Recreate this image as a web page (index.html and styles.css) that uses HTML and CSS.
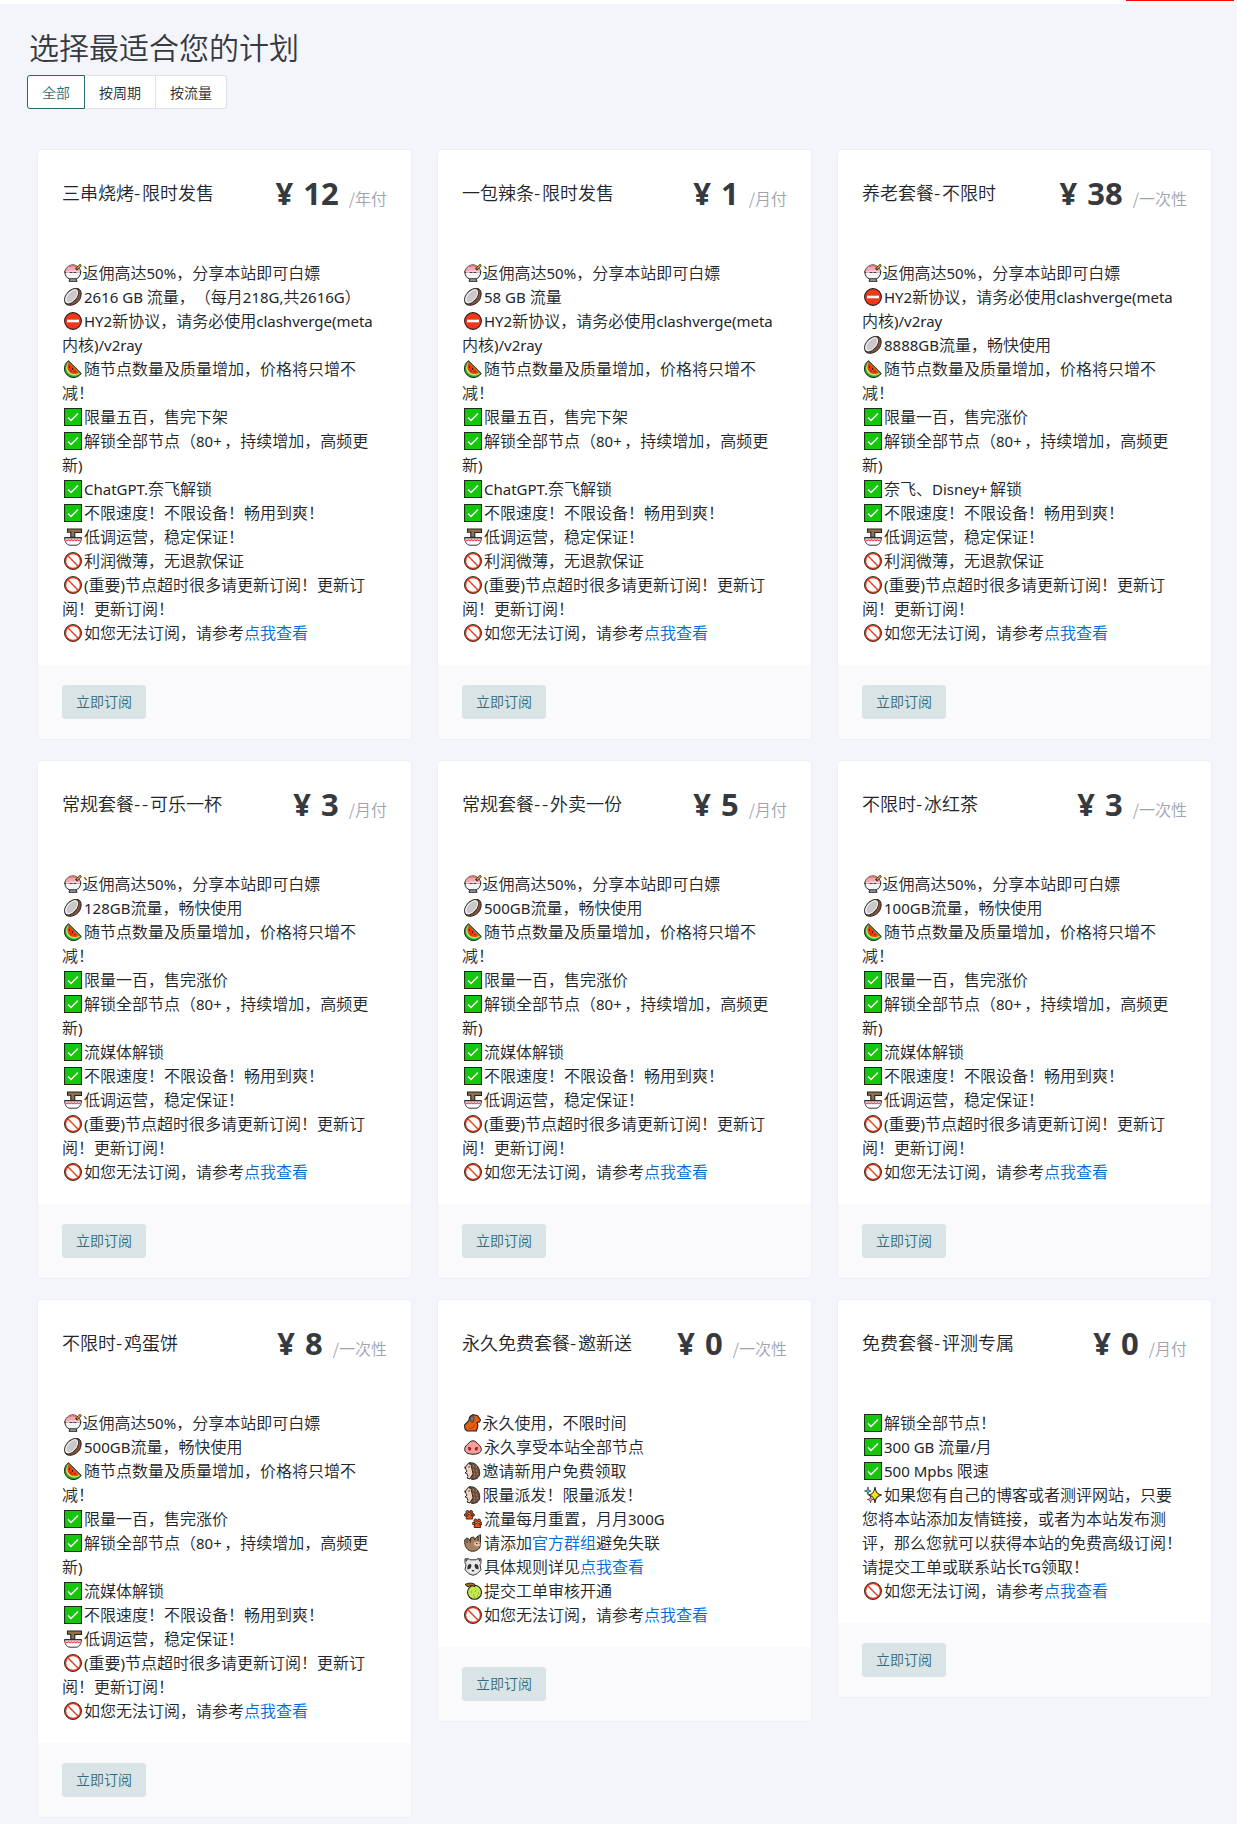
FILE: index.html
```html
<!DOCTYPE html>
<html lang="zh-CN">
<head>
<meta charset="utf-8">
<title>选择最适合您的计划</title>
<link rel="stylesheet" href="styles.css">
</head>
<body>
<svg class="sprite" aria-hidden="true">
  <symbol id="ice" viewBox="0 0 18 18"><path d="M5 17.300h8l-1.500-4h-5z" fill="#a9adb2" stroke="#222" stroke-width="1"/><path d="M.8 7.500h16c0 4-2.500 6.800-4.500 7.300h-7C3 14.300.8 11.500.8 7.500z" fill="#f4f4f6" stroke="#222"/><path d="M.8 8.500C.8 4.500 5 .8 8.800.8s8 3.700 8 7.700z" fill="#f3a9b0" stroke="#333" stroke-width=".9"/><path d="M2 8h3l2-1.500L9 8l2-1.500L13 8h3" stroke="#fbdadd" stroke-width="1.300" fill="none"/><path d="M5 3c2-1.500 5-1.500 7 0" stroke="#e0707c" stroke-width="1.500" fill="none"/><path d="M12 5.500L17 .8" stroke="#332a15" stroke-width="2.600"/><path d="M13 4.500L16.600 1.200" stroke="#efb11c" stroke-width="1.200"/></symbol>
  <symbol id="coconut" viewBox="0 0 18 18"><path d="M2 16C-1 13 5 1.500 12.500.6c4.500-.4 5.500 4.500 4 9C15 15.500 6 19.500 2 16z" fill="#885139" stroke="#241d1a"/><ellipse cx="7.600" cy="8.200" rx="9" ry="5.300" transform="rotate(-50 7.600 8.200)" fill="#f2f2f2" stroke="#3b302b"/><ellipse cx="7.800" cy="8.200" rx="7" ry="3.700" transform="rotate(-50 7.800 8.200)" fill="#c9c9cb"/></symbol>
  <symbol id="noentry" viewBox="0 0 18 18"><circle cx="9" cy="9" r="8.400" fill="#f03a17" stroke="#222" stroke-width="1.100"/><path d="M3 7.700h12v2.600H3z" fill="#fff"/></symbol>
  <symbol id="melon" viewBox="0 0 18 18"><path d="M4.500.8C-.5 4.500-.8 11 3 14.800s10 4 14.300-1.300z" fill="#16a82e" stroke="#222"/><path d="M4.300 2C1.300 6 1.300 10.500 4.300 13.300s8 3.500 11.700.3z" fill="#bce64a"/><path d="M4.700 2C2.800 6 3 9.500 5.300 11.800s6 3 9.700 1.200z" fill="#f03a17"/><path d="M5.500 6v2M8.500 8v2M7 10.500v1M11 11v1" stroke="#511"/></symbol>
  <symbol id="check" viewBox="0 0 18 18"><path d="M.5.500h17v17H.5z" fill="#16c60c" stroke="#173117" stroke-width="1.100"/><path d="M4 9.500l3 3 7-7" stroke="#fff" stroke-width="1.500" fill="none"/></symbol>
  <symbol id="bowl" viewBox="0 0 18 18"><path d="M.6 9.500h16.800c0 4-2 7.700-5.400 7.700H6C2.600 17.200.6 13.500.6 9.500z" fill="#fff" stroke="#333"/><path d="M1.500 11.800l1.500 1 1.500-1 1.500 1 1.500-1 1.500 1 1.500-1 1.500 1 1.500-1 1.500 1 1.500-1" stroke="#f04a5a" stroke-width="1.200" fill="none"/><path d="M17.500 1H3.500v3.200h3.300v5h4V4.500h6.700z" fill="#927047" stroke="#222" stroke-width="1.100"/><path d="M.6 9.800h16.800" stroke="#333" stroke-width="1.200"/></symbol>
  <symbol id="ban" viewBox="0 0 18 18"><circle cx="9" cy="9" r="7.700" fill="#fff" stroke="#f03a17" stroke-width="1.800"/><circle cx="9" cy="9" r="8.500" fill="none" stroke="#222" stroke-width=".9"/><path d="M3.800 3.800l10.400 10.400" stroke="#e0452a" stroke-width="1.500"/></symbol>
  <symbol id="ape" viewBox="0 0 18 18"><path d="M6 2.500L9 .7l4.500 1 3 4-1 2.300-2.500.5 1 3-1.500 5.500H3L1 15l-.5-4 4-4z" fill="#e95d0c" stroke="#222" stroke-width="1.100"/><path d="M6.500 3c1.500-1.500 4-.5 3.500 1.500l-.8 3.500c-2 1-3.700-1-2.700-5z" fill="#747474" stroke="#333" stroke-width=".8"/><path d="M5 14.500c4 0 5-2 6-4" stroke="#a23c06" fill="none"/></symbol>
  <symbol id="snout" viewBox="0 0 18 18"><path d="M9 2.800c2.500 0 3.500 2 6 4 3 3 3.500 7-1 8.700-3 1-7 1-10 0C0 14-.5 9.800 3 6.800c2-2 3.500-4 6-4z" fill="#f2a19a" stroke="#222"/><path d="M4 9.300c2-1 4 .5 3 2.500s-3 1-3-2.500zM14 9.300c-2-1-4 .5-3 2.500s3 1 3-2.500z" fill="#a61f2f"/></symbol>
  <symbol id="hog" viewBox="0 0 18 18"><path d="M5 .8c7-1 11 5 10.700 11-.5 4-3.700 6-8 5.500L5 15z" fill="#70513f" stroke="#222"/><path d="M4 1.500l3 1 1 5 1 4-3 5.500-3-1 1-1.500-1-3-2-.5 2-2L1 6z" fill="#f2d4c1" stroke="#332a27"/><path d="M9 4h1m2 1h1m-4 3h1m2 1h1m-3 3h1m2 0h1m-4 3h1" stroke="#c59d85"/><path d="M.5 5.500h1.500M4.500 5h1" stroke="#111" stroke-width="1.500"/></symbol>
  <symbol id="paws" viewBox="0 0 18 18"><g id="paw" fill="#e95511" stroke="#331a10" stroke-width=".9"><circle cx="1.800" cy="5" r="1.400"/><circle cx="3.500" cy="2" r="1.500"/><circle cx="7" cy="2" r="1.500"/><circle cx="9" cy="5" r="1.400"/><path d="M5.300 4C3 5 2 7 2.200 9h6.400C9 7 7.500 5 5.300 4z"/></g><use href="#paw" x="8" y="8.500"/></symbol>
  <symbol id="sloth" viewBox="0 0 18 18"><path d="M16.500.7v9C17 14 13 17.300 8.500 17.300S0 13 .7 6l2-2 2 .8 1 2 1-3 3-.8 1 3 2-3z" fill="#a7825f" stroke="#332a23"/><path d="M9.500 9l4-1.500 3 1v3l-3 1-3-1z" fill="#dfc0a2"/><path d="M3 5v4M7 5l-1 4M12 9.500h1.500m2 0h1M14 2v5" stroke="#47382d"/></symbol>
  <symbol id="panda" viewBox="0 0 18 18"><path d="M1 .8h4l1 1h6l1-1h4v4l-1 2 1 5-4 4-4 1.500-4-1.500-4-4 1-5-1-2z" fill="#e7e7e8" stroke="#333"/><path d="M1.500 1.300h2.700L2 4zM16.500 1.300h-2.700L16 4z" fill="#444"/><path d="M6 6c2 0 1.500 2.500.5 4.500l-3 1C3 9 4 6 6 6zM12 6c-2 0-1.500 2.500-.5 4.500l3 1C15 9 14 6 12 6z" fill="#333"/><path d="M7.500 12h3L9 14z" fill="#222"/></symbol>
  <symbol id="fruit" viewBox="0 0 18 18"><circle cx="10.500" cy="10.300" r="7" fill="#c4e64b" stroke="#222" stroke-width="1.100"/><path d="M1 2.500c4-2 8-1.500 10 0v2C8 3.500 5 3 4 5z" fill="#a86b1d" stroke="#222"/><path d="M7 10h1m3-1h1m2 2h1m-6 2h1m3 1h1m-4 1h1" stroke="#6d942b" stroke-width="1.200"/></symbol>
  <symbol id="sparkles" viewBox="0 0 18 18"><path d="M11 1c.5 5 2 7 6.700 8-4.700 1-6.200 3-6.700 8-.5-5-2-7-6.500-8C9 8 10.500 6 11 1z" fill="#fde300" stroke="#222" stroke-width="1.100"/><path d="M4 1c.3 3 .8 3.500 3 4-2.200.5-2.700 1-3 4-.3-3-.8-3.500-3.500-4C3.200 4.500 3.700 4 4 1z" fill="#35bce5" stroke="#263238" stroke-width=".7"/><path d="M6.500 10c.3 2.500.8 3 3 3.500-2.200.5-2.700 1-3 3.500-.3-2.500-.8-3-3-3.500 2.200-.5 2.700-1 3-3.500z" fill="#f59ab6" stroke="#392630" stroke-width=".7"/></symbol>
</svg>

<header class="topbar"><span class="topbar-mark"></span></header>
<main class="page">
  <h1 class="heading">选择最适合您的计划</h1>
  <nav class="tabs"><a class="tab active">全部</a><a class="tab">按周期</a><a class="tab">按流量</a></nav>

  <section class="plans">
    <article class="card">
      <header class="card-head"><h2 class="name">三串烧烤<i>-</i>限时发售</h2><div class="price"><b>¥ 12</b><span class="term">/年付</span></div></header>
      <div class="card-body">
        <p><svg class="e n"><use href="#ice"/></svg>返佣高达<span class="en">50%</span>，分享本站即可白嫖</p>
        <p><svg class="e"><use href="#coconut"/></svg><span class="en">2616 GB </span>流量，（每月<span class="en">218G,</span>共<span class="en">2616G</span>）</p>
        <p><svg class="e"><use href="#noentry"/></svg><span class="en">HY2</span>新协议，请务必使用<span class="en">clashverge(meta</span><br>内核<span class="en">)/v2ray</span></p>
        <p><svg class="e"><use href="#melon"/></svg>随节点数量及质量增加，价格将只增不<br>减！</p>
        <p><svg class="e"><use href="#check"/></svg>限量五百，售完下架</p>
        <p><svg class="e"><use href="#check"/></svg>解锁全部节点（<span class="en">80<u>+</u></span>，持续增加，高频更<br>新<span class="en">)</span></p>
        <p><svg class="e"><use href="#check"/></svg><span class="en">ChatGPT.</span>奈飞解锁</p>
        <p><svg class="e"><use href="#check"/></svg>不限速度！不限设备！畅用到爽！</p>
        <p><svg class="e"><use href="#bowl"/></svg>低调运营，稳定保证！</p>
        <p><svg class="e"><use href="#ban"/></svg>利润微薄，无退款保证</p>
        <p><svg class="e"><use href="#ban"/></svg><span class="en">(</span>重要<span class="en">)</span>节点超时很多请更新订阅！更新订<br>阅！更新订阅！</p>
        <p><svg class="e"><use href="#ban"/></svg>如您无法订阅，请参考<a>点我查看</a></p>
      </div>
      <footer class="card-foot"><button class="btn">立即订阅</button></footer>
    </article>

    <article class="card">
      <header class="card-head"><h2 class="name">一包辣条<i>-</i>限时发售</h2><div class="price"><b>¥ 1</b><span class="term">/月付</span></div></header>
      <div class="card-body">
        <p><svg class="e n"><use href="#ice"/></svg>返佣高达<span class="en">50%</span>，分享本站即可白嫖</p>
        <p><svg class="e"><use href="#coconut"/></svg><span class="en">58 GB </span>流量</p>
        <p><svg class="e"><use href="#noentry"/></svg><span class="en">HY2</span>新协议，请务必使用<span class="en">clashverge(meta</span><br>内核<span class="en">)/v2ray</span></p>
        <p><svg class="e"><use href="#melon"/></svg>随节点数量及质量增加，价格将只增不<br>减！</p>
        <p><svg class="e"><use href="#check"/></svg>限量五百，售完下架</p>
        <p><svg class="e"><use href="#check"/></svg>解锁全部节点（<span class="en">80<u>+</u></span>，持续增加，高频更<br>新<span class="en">)</span></p>
        <p><svg class="e"><use href="#check"/></svg><span class="en">ChatGPT.</span>奈飞解锁</p>
        <p><svg class="e"><use href="#check"/></svg>不限速度！不限设备！畅用到爽！</p>
        <p><svg class="e"><use href="#bowl"/></svg>低调运营，稳定保证！</p>
        <p><svg class="e"><use href="#ban"/></svg>利润微薄，无退款保证</p>
        <p><svg class="e"><use href="#ban"/></svg><span class="en">(</span>重要<span class="en">)</span>节点超时很多请更新订阅！更新订<br>阅！更新订阅！</p>
        <p><svg class="e"><use href="#ban"/></svg>如您无法订阅，请参考<a>点我查看</a></p>
      </div>
      <footer class="card-foot"><button class="btn">立即订阅</button></footer>
    </article>

    <article class="card">
      <header class="card-head"><h2 class="name">养老套餐<i>-</i>不限时</h2><div class="price"><b>¥ 38</b><span class="term">/一次性</span></div></header>
      <div class="card-body">
        <p><svg class="e n"><use href="#ice"/></svg>返佣高达<span class="en">50%</span>，分享本站即可白嫖</p>
        <p><svg class="e"><use href="#noentry"/></svg><span class="en">HY2</span>新协议，请务必使用<span class="en">clashverge(meta</span><br>内核<span class="en">)/v2ray</span></p>
        <p><svg class="e"><use href="#coconut"/></svg><span class="en">8888GB</span>流量，畅快使用</p>
        <p><svg class="e"><use href="#melon"/></svg>随节点数量及质量增加，价格将只增不<br>减！</p>
        <p><svg class="e"><use href="#check"/></svg>限量一百，售完涨价</p>
        <p><svg class="e"><use href="#check"/></svg>解锁全部节点（<span class="en">80<u>+</u></span>，持续增加，高频更<br>新<span class="en">)</span></p>
        <p><svg class="e"><use href="#check"/></svg>奈飞、<span class="en">Disney<u>+</u></span>解锁</p>
        <p><svg class="e"><use href="#check"/></svg>不限速度！不限设备！畅用到爽！</p>
        <p><svg class="e"><use href="#bowl"/></svg>低调运营，稳定保证！</p>
        <p><svg class="e"><use href="#ban"/></svg>利润微薄，无退款保证</p>
        <p><svg class="e"><use href="#ban"/></svg><span class="en">(</span>重要<span class="en">)</span>节点超时很多请更新订阅！更新订<br>阅！更新订阅！</p>
        <p><svg class="e"><use href="#ban"/></svg>如您无法订阅，请参考<a>点我查看</a></p>
      </div>
      <footer class="card-foot"><button class="btn">立即订阅</button></footer>
    </article>

    <article class="card">
      <header class="card-head"><h2 class="name">常规套餐<i>--</i>可乐一杯</h2><div class="price"><b>¥ 3</b><span class="term">/月付</span></div></header>
      <div class="card-body">
        <p><svg class="e n"><use href="#ice"/></svg>返佣高达<span class="en">50%</span>，分享本站即可白嫖</p>
        <p><svg class="e"><use href="#coconut"/></svg><span class="en">128GB</span>流量，畅快使用</p>
        <p><svg class="e"><use href="#melon"/></svg>随节点数量及质量增加，价格将只增不<br>减！</p>
        <p><svg class="e"><use href="#check"/></svg>限量一百，售完涨价</p>
        <p><svg class="e"><use href="#check"/></svg>解锁全部节点（<span class="en">80<u>+</u></span>，持续增加，高频更<br>新<span class="en">)</span></p>
        <p><svg class="e"><use href="#check"/></svg>流媒体解锁</p>
        <p><svg class="e"><use href="#check"/></svg>不限速度！不限设备！畅用到爽！</p>
        <p><svg class="e"><use href="#bowl"/></svg>低调运营，稳定保证！</p>
        <p><svg class="e"><use href="#ban"/></svg><span class="en">(</span>重要<span class="en">)</span>节点超时很多请更新订阅！更新订<br>阅！更新订阅！</p>
        <p><svg class="e"><use href="#ban"/></svg>如您无法订阅，请参考<a>点我查看</a></p>
      </div>
      <footer class="card-foot"><button class="btn">立即订阅</button></footer>
    </article>

    <article class="card">
      <header class="card-head"><h2 class="name">常规套餐<i>--</i>外卖一份</h2><div class="price"><b>¥ 5</b><span class="term">/月付</span></div></header>
      <div class="card-body">
        <p><svg class="e n"><use href="#ice"/></svg>返佣高达<span class="en">50%</span>，分享本站即可白嫖</p>
        <p><svg class="e"><use href="#coconut"/></svg><span class="en">500GB</span>流量，畅快使用</p>
        <p><svg class="e"><use href="#melon"/></svg>随节点数量及质量增加，价格将只增不<br>减！</p>
        <p><svg class="e"><use href="#check"/></svg>限量一百，售完涨价</p>
        <p><svg class="e"><use href="#check"/></svg>解锁全部节点（<span class="en">80<u>+</u></span>，持续增加，高频更<br>新<span class="en">)</span></p>
        <p><svg class="e"><use href="#check"/></svg>流媒体解锁</p>
        <p><svg class="e"><use href="#check"/></svg>不限速度！不限设备！畅用到爽！</p>
        <p><svg class="e"><use href="#bowl"/></svg>低调运营，稳定保证！</p>
        <p><svg class="e"><use href="#ban"/></svg><span class="en">(</span>重要<span class="en">)</span>节点超时很多请更新订阅！更新订<br>阅！更新订阅！</p>
        <p><svg class="e"><use href="#ban"/></svg>如您无法订阅，请参考<a>点我查看</a></p>
      </div>
      <footer class="card-foot"><button class="btn">立即订阅</button></footer>
    </article>

    <article class="card">
      <header class="card-head"><h2 class="name">不限时<i>-</i>冰红茶</h2><div class="price"><b>¥ 3</b><span class="term">/一次性</span></div></header>
      <div class="card-body">
        <p><svg class="e n"><use href="#ice"/></svg>返佣高达<span class="en">50%</span>，分享本站即可白嫖</p>
        <p><svg class="e"><use href="#coconut"/></svg><span class="en">100GB</span>流量，畅快使用</p>
        <p><svg class="e"><use href="#melon"/></svg>随节点数量及质量增加，价格将只增不<br>减！</p>
        <p><svg class="e"><use href="#check"/></svg>限量一百，售完涨价</p>
        <p><svg class="e"><use href="#check"/></svg>解锁全部节点（<span class="en">80<u>+</u></span>，持续增加，高频更<br>新<span class="en">)</span></p>
        <p><svg class="e"><use href="#check"/></svg>流媒体解锁</p>
        <p><svg class="e"><use href="#check"/></svg>不限速度！不限设备！畅用到爽！</p>
        <p><svg class="e"><use href="#bowl"/></svg>低调运营，稳定保证！</p>
        <p><svg class="e"><use href="#ban"/></svg><span class="en">(</span>重要<span class="en">)</span>节点超时很多请更新订阅！更新订<br>阅！更新订阅！</p>
        <p><svg class="e"><use href="#ban"/></svg>如您无法订阅，请参考<a>点我查看</a></p>
      </div>
      <footer class="card-foot"><button class="btn">立即订阅</button></footer>
    </article>

    <article class="card">
      <header class="card-head"><h2 class="name">不限时<i>-</i>鸡蛋饼</h2><div class="price"><b>¥ 8</b><span class="term">/一次性</span></div></header>
      <div class="card-body">
        <p><svg class="e n"><use href="#ice"/></svg>返佣高达<span class="en">50%</span>，分享本站即可白嫖</p>
        <p><svg class="e"><use href="#coconut"/></svg><span class="en">500GB</span>流量，畅快使用</p>
        <p><svg class="e"><use href="#melon"/></svg>随节点数量及质量增加，价格将只增不<br>减！</p>
        <p><svg class="e"><use href="#check"/></svg>限量一百，售完涨价</p>
        <p><svg class="e"><use href="#check"/></svg>解锁全部节点（<span class="en">80<u>+</u></span>，持续增加，高频更<br>新<span class="en">)</span></p>
        <p><svg class="e"><use href="#check"/></svg>流媒体解锁</p>
        <p><svg class="e"><use href="#check"/></svg>不限速度！不限设备！畅用到爽！</p>
        <p><svg class="e"><use href="#bowl"/></svg>低调运营，稳定保证！</p>
        <p><svg class="e"><use href="#ban"/></svg><span class="en">(</span>重要<span class="en">)</span>节点超时很多请更新订阅！更新订<br>阅！更新订阅！</p>
        <p><svg class="e"><use href="#ban"/></svg>如您无法订阅，请参考<a>点我查看</a></p>
      </div>
      <footer class="card-foot"><button class="btn">立即订阅</button></footer>
    </article>

    <article class="card">
      <header class="card-head"><h2 class="name">永久免费套餐<i>-</i>邀新送</h2><div class="price"><b>¥ 0</b><span class="term">/一次性</span></div></header>
      <div class="card-body">
        <p><svg class="e n"><use href="#ape"/></svg>永久使用，不限时间</p>
        <p><svg class="e"><use href="#snout"/></svg>永久享受本站全部节点</p>
        <p><svg class="e n"><use href="#hog"/></svg>邀请新用户免费领取</p>
        <p><svg class="e n"><use href="#hog"/></svg>限量派发！限量派发！</p>
        <p><svg class="e"><use href="#paws"/></svg>流量每月重置，月月<span class="en">300G</span></p>
        <p><svg class="e"><use href="#sloth"/></svg>请添加<a>官方群组</a>避免失联</p>
        <p><svg class="e"><use href="#panda"/></svg>具体规则详见<a>点我查看</a></p>
        <p><svg class="e"><use href="#fruit"/></svg>提交工单审核开通</p>
        <p><svg class="e"><use href="#ban"/></svg>如您无法订阅，请参考<a>点我查看</a></p>
      </div>
      <footer class="card-foot"><button class="btn">立即订阅</button></footer>
    </article>

    <article class="card">
      <header class="card-head"><h2 class="name">免费套餐<i>-</i>评测专属</h2><div class="price"><b>¥ 0</b><span class="term">/月付</span></div></header>
      <div class="card-body">
        <p><svg class="e"><use href="#check"/></svg>解锁全部节点！</p>
        <p><svg class="e"><use href="#check"/></svg><span class="en">300 GB </span>流量<span class="en">/</span>月</p>
        <p><svg class="e"><use href="#check"/></svg><span class="en">500 Mpbs </span>限速</p>
        <p><svg class="e"><use href="#sparkles"/></svg>如果您有自己的博客或者测评网站，只要<br>您将本站添加友情链接，或者为本站发布测<br>评，那么您就可以获得本站的免费高级订阅！<br>请提交工单或联系站长<span class="en">TG</span>领取！</p>
        <p><svg class="e"><use href="#ban"/></svg>如您无法订阅，请参考<a>点我查看</a></p>
      </div>
      <footer class="card-foot"><button class="btn">立即订阅</button></footer>
    </article>
  </section>
</main>
</body>
</html>
```
FILE: styles.css
```css
* { box-sizing: border-box; }
body {
  margin: 0;
  background: #f4f5fb;
  color: #212529;
  font: 350 16px/24px "Noto Sans CJK SC", sans-serif;
  text-spacing-trim: space-all;
}
.sprite { display: none; }
.topbar {
  height: 4px;
  background: #fff;
  display: flex;
  justify-content: flex-end;
  padding-right: 3px;
}
.topbar-mark { width: 108px; height: 1px; background: #f00; }
.page { padding: 23px 25px 0 27px; }
.heading {
  margin: 0 0 0 2px;
  font-size: 30px;
  font-weight: 350;
  line-height: 38px;
  color: #343a40;
}
.tabs { display: flex; margin-top: 10px; }
.tab {
  height: 34px;
  padding: 0 14px;
  border: 1px solid #dfe1e8;
  border-left-width: 0;
  background: #fff;
  font-size: 14px;
  line-height: 33px;
}
.tab:last-child { border-radius: 0 3px 3px 0; }
.tab.active {
  border: 1px solid #2a6670;
  border-radius: 3px 0 0 3px;
  color: #306c76;
}
.plans {
  display: grid;
  grid-template-columns: repeat(3, 375px);
  gap: 20px 25px;
  align-items: start;
  margin: 40px 0 0 10px;
}
.card {
  border: 1px solid #eeeff5;
  border-radius: 4px;
  background: #fff;
  overflow: hidden;
}
.card-head {
  display: flex;
  justify-content: space-between;
  height: 110px;
  padding: 23px 24px 0;
}
.name { margin: 0; font-size: 18px; font-weight: 350; line-height: 39px; white-space: nowrap; }
.name i { font-style: normal; letter-spacing: 1.8px; }
.price { line-height: 40px; white-space: nowrap; }
.price b {
  font: 700 31px/40px "Open Sans", sans-serif;
  color: #343a40;
  margin-right: 10px;
  word-spacing: 2px;
}
.term { color: #9fa3b1; font-size: 16px; }
.card-body { padding: 0 24px 21px; white-space: nowrap; }
.card-body p { margin: 0; }
.card-body a { color: #0069d9; }
.en { font: 15px/1 "Noto Sans", sans-serif; white-space: pre; }
.en u { text-decoration: none; letter-spacing: 2.4px; }
.e { width: 18px; height: 18px; margin: 0 2px; vertical-align: -3px; }
.e.n { margin-right: .5px; }
.card-foot { padding: 20px 24px; background: #fafafc; height: 74px; }
.btn {
  display: block;
  width: 84px;
  height: 34px;
  padding: 0 0 2px;
  border: 0;
  border-radius: 3px;
  background: #dae4e6;
  color: #306c76;
  font: 350 14px/32px "Noto Sans CJK SC", sans-serif;
}
```
